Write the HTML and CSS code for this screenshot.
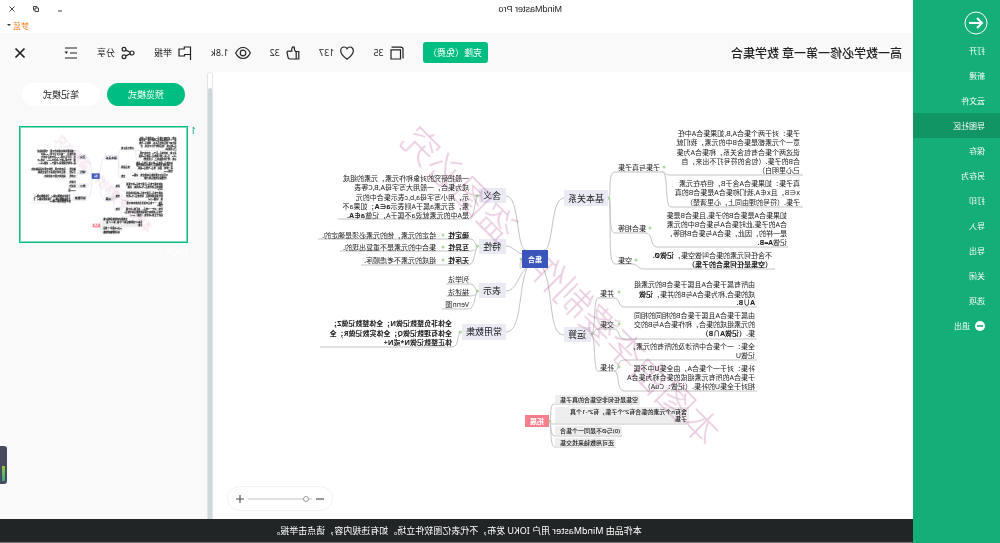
FILE: index.html
```html
<!DOCTYPE html>
<html lang="zh-CN">
<head>
<meta charset="utf-8">
<title>MindMaster Pro</title>
<link rel="stylesheet" href="styles.css">
</head>
<body>
<div class="window">
  <nav class="sidebar">
    <button class="back" aria-label="返回">
      <svg viewBox="0 0 24 24"><circle cx="12" cy="12" r="11"/><path d="M19 12H6M11 7l-5 5 5 5" stroke-width="2"/></svg>
    </button>
    <a class="item" href="#">打开</a>
    <a class="item" href="#">新建</a>
    <a class="item" href="#">云文件</a>
    <a class="item active" href="#">导图社区</a>
    <a class="item" href="#">保存</a>
    <a class="item" href="#">另存为</a>
    <a class="item" href="#">打印</a>
    <a class="item" href="#">导入</a>
    <a class="item" href="#">导出</a>
    <a class="item" href="#">关闭</a>
    <a class="item" href="#">选项</a>
    <a class="item" href="#"><svg class="exit" viewBox="0 0 10 10"><circle cx="5" cy="5" r="5" fill="#fff"/><path d="M2 5h6" stroke="#14ae78" stroke-width="1.6"/></svg>退出</a>
  </nav>
  <div class="main">
    <header class="titlebar">
      <div class="caption">
        <h1>MindMaster Pro</h1>
        <div class="controls">
          <button aria-label="最小化"><svg viewBox="0 0 8 8"><path d="M2 6h4"/></svg></button>
          <button aria-label="还原"><svg viewBox="0 0 8 8"><path d="M3 3V1.500h3.500V5H5M1.500 3H5v3.500H1.500z"/></svg></button>
          <button aria-label="关闭窗口"><svg viewBox="0 0 8 8"><path d="M1.500 1.500l5 5M6.500 1.500l-5 5"/></svg></button>
        </div>
      </div>
      <button class="user">梦蓝<span class="caret"></span></button>
    </header>
    <div class="toolbar">
      <h2>高一数学必修一第一章 数学集合</h2>
      <button class="clone">克隆（免费）</button>
      <button class="stat"><svg viewBox="0 0 14 14"><path d="M12.500 1.200H3a2 2 0 0 0-2 2V12.500M3.500 3.800H13V13H3.500z"/></svg>35</button>
      <button class="stat"><svg viewBox="0 0 14 14"><path d="M7 13.200C4.500 11.300.7 8.500.7 4.900.7 2.500 2.300 1 4.200 1 5.500 1 6.500 1.700 7 2.700 7.500 1.700 8.500 1 9.800 1c1.900 0 3.500 1.500 3.500 3.900 0 3.600-3.800 6.400-6.300 8.300z"/></svg>137</button>
      <button class="stat"><svg viewBox="0 0 14 14"><path d="M1.200 5.500h2.600V13H1.200zM3.800 6.200C5.500 5.200 5.800 3.700 5.900 1c1.900-.4 2.700 1 2.300 4.200h3.300c1.200 0 1.600.8 1.400 1.700l-1 4.800c-.2.900-.8 1.300-1.600 1.300H3.800"/></svg>32</button>
      <button class="stat"><svg class="wide" viewBox="0 0 16 14"><path d="M.7 7C2.500 3.300 5 1.500 8 1.500S13.500 3.300 15.300 7C13.500 10.700 11 12.500 8 12.500S2.500 10.700.7 7z"/><circle cx="8" cy="7" r="2.800"/></svg>1.8k</button>
      <button class="stat"><svg viewBox="0 0 14 14"><path d="M1.500 14V1h6.200v2H13v7H7.500V8.500h-6"/></svg>举报</button>
      <button class="stat"><svg viewBox="0 0 14 14"><circle cx="3" cy="7" r="2"/><circle cx="11" cy="3.300" r="1.900"/><circle cx="11" cy="10.700" r="1.900"/><path d="M4.800 6.200l4.400-2.100M4.800 7.800l4.400 2.100"/></svg>分享</button>
      <button class="plain" aria-label="大纲"><svg viewBox="0 0 14 14"><path d="M1 2h12M1 7h7M1 12h12"/><path d="M10 5.500h3.500L11.700 8z" class="solid"/></svg></button>
      <button class="plain close" aria-label="关闭"><svg viewBox="0 0 14 14"><path d="M2.500 2.500l9 9M11.500 2.500l-9 9" stroke-width="1.700"/></svg></button>
    </div>
    <div class="content">
      <section class="canvas">
        <svg class="map" viewBox="87 72 700 447">
          <g id="mindmap">
            <g class="links">
              <path d="M436 198C450 198 446 250 456 250M436 335C452 335 446 290 457 268"/>
              <path d="M494 196C480 196 484 250 474 250M494 246C488 246 484 252 478 254M494 291C484 291 482 276 474 268M494 332C478 332 482 290 473 268"/>
              <path d="M392 198C388 198 393 172 385 172H338C333 172 336 175 330 175H197M338 172C331 172 336 207 329 207H197"/>
              <path d="M391 198C388 198 393 233 385 233H354C347 233 350 247 343 247H212M391 198C388 220 393 264 385 264H368C362 264 362 269 357 269H225"/>
              <path d="M409 334C404 334 407 298 402 298H386C380 298 382 307 376 307H243M409 334C404 334 407 329 402 329H386C380 329 382 339 376 339H243"/>
              <path d="M409 334C404 334 407 371 402 371H386C380 371 384 360 376 360H243M386 371C380 371 384 391 376 391H243"/>
              <path d="M521 195C526 195 524 219 532 219H662M521 246C526 246 524 239 530 239H682M521 246C524 248 524 251 530 251H660M521 246C526 246 524 265 532 265H639"/>
              <path d="M521 291C526 291 524 284 530 284H554M521 291C524 293 524 296 530 296H554M521 291C526 291 524 309 532 309H558M538 332C544 332 540 347 548 347H680"/>
              <path d="M451 421C448 421 451 404 446 404H360M451 421C449 424 449 424 445 424H311M451 421C448 421 451 436 445 436H378M451 421C448 421 451 447 445 447H384"/>
            </g>
            <g class="dots">
              <circle cx="391" cy="198" r="1.500"/><circle cx="336" cy="167" r="1.500"/><circle cx="350" cy="228" r="1.500"/><circle cx="364" cy="260" r="1.500"/>
              <circle cx="408" cy="334" r="1.500"/><circle cx="381" cy="292" r="1.500"/><circle cx="381" cy="324" r="1.500"/><circle cx="381" cy="367" r="1.500"/>
              <circle cx="479" cy="259" r="1.500"/><circle cx="523" cy="196" r="1.500"/><circle cx="523" cy="246" r="1.500"/><circle cx="523" cy="291" r="1.500"/><circle cx="540" cy="332" r="1.500"/>
              <circle cx="557" cy="235" r="1.500"/><circle cx="557" cy="247" r="1.500"/><circle cx="557" cy="260" r="1.500"/><circle cx="450" cy="421" r="1.500"/>
            </g>
            <g class="main-topics">
              <rect x="392" y="190" width="44" height="16"/><text x="414" y="202">基本关系</text>
              <rect x="409" y="327" width="27" height="15"/><text x="423" y="338">运算</text>
              <rect x="494" y="188" width="27" height="15"/><text x="508" y="199">含义</text>
              <rect x="494" y="239" width="27" height="15"/><text x="508" y="250">特性</text>
              <rect x="494" y="283" width="27" height="15"/><text x="508" y="294">表示</text>
              <rect x="494" y="324" width="44" height="16"/><text x="516" y="335">常用数集</text>
            </g>
            <g class="notes">
              <rect x="360" y="395" width="85" height="9"/><rect x="311" y="407" width="134" height="16"/><rect x="378" y="426" width="67" height="9"/><rect x="384" y="438" width="61" height="9"/>
              <text x="362" y="402">空集是任何非空集合的真子集</text>
              <text><tspan x="313" y="414">含有n个元素的集合有2ⁿ个子集，有2ⁿ-1个真</tspan><tspan x="313" y="421">子集</tspan></text>
              <text x="380" y="433">(0)与Ø不是同一个集合</text>
              <text x="386" y="445">还可用数轴来找交集</text>
            </g>
            <g class="topics">
              <text x="340" y="170">子集与真子集</text><text x="354" y="231">集合相等</text><text x="368" y="263">空集</text>
              <text x="386" y="296">并集</text><text x="386" y="327">交集</text><text x="386" y="370">补集</text>
              <text><tspan x="200" y="136">子集：对于两个集合A,B,如果集合A中任</tspan><tspan x="200" y="145">意一个元素都是集合B中的元素，我们就</tspan><tspan x="200" y="155">说这两个集合有包含关系，称集合A为集</tspan><tspan x="200" y="164">合B的子集.（包含的符号打不出来，自</tspan><tspan x="200" y="173">己心里明白）</tspan></text>
              <text><tspan x="200" y="186">真子集：如果集合A含于B，但存在元素</tspan><tspan x="200" y="195">x∈B，且x∉A,我们称集合A是集合B的真</tspan><tspan x="200" y="205">子集.（符号的理由同上，心里清楚）</tspan></text>
              <text><tspan x="213" y="218">如果集合A是集合B的子集,且集合B是集</tspan><tspan x="213" y="227">合A的子集,此时集合A与集合B中的元素</tspan><tspan x="213" y="236">是一样的，因此，集合A与集合B相等，</tspan><tspan x="213" y="245">记做<tspan class="b">A=B.</tspan></tspan></text>
              <text><tspan x="228" y="258">不含任何元素的集合叫做空集，<tspan class="b">记做Ø.</tspan></tspan><tspan x="228" y="267" class="b">（空集是任何集合的子集）</tspan></text>
              <text><tspan x="245" y="287">由所有属于集合A且属于集合B的元素组</tspan><tspan x="245" y="297">成的集合,称为集合A与B的并集，<tspan class="b">记做</tspan></tspan><tspan x="245" y="305" class="b">A∪B.</tspan></text>
              <text><tspan x="245" y="318">由属于集合A且属于集合B的相同的相同</tspan><tspan x="245" y="327">的元素组成的集合，称作集合A与B的交</tspan><tspan x="245" y="336">集.<tspan class="b">（记做A∩B）</tspan></tspan></text>
              <text><tspan x="245" y="349">全集：一个集合中所涉及的所有的元素，</tspan><tspan x="245" y="358">记做U</tspan></text>
              <text><tspan x="245" y="371">补集：对于一个集合A，由全集U中不属</tspan><tspan x="245" y="380">于集合A的所有元素组成的集合称为集合A</tspan><tspan x="245" y="389">相对于全集U的补集.（记做：CuA）</tspan></text>
              <text><tspan x="531" y="181">一般把研究的对象称作元素，元素的组成</tspan><tspan x="531" y="190">成为集合，一般用大写字母A,B,C等表</tspan><tspan x="531" y="200">示，用小写字母a,b,c表示集合中的元</tspan><tspan x="531" y="209">素，若元素a属于A则表示<tspan class="b">a∈A</tspan>；如果a不</tspan><tspan x="531" y="218">是A中的元素就说a不属于A，记做<tspan class="b">a∉A.</tspan></tspan></text>
              <text class="b" x="531" y="238">确定性</text><text x="564" y="238">给定的元素，他的元素必须是确定的.</text>
              <text class="b" x="531" y="250">互异性</text><text x="564" y="250">集合中的元素是不重复出现的.</text>
              <text class="b" x="531" y="263">无序性</text><text x="564" y="263">组成的元素不考虑顺序.</text>
              <text x="531" y="282">列举法</text><text x="531" y="295">描述法</text><text x="531" y="307">Venn图</text>
              <text class="b"><tspan x="548" y="326">全体非负整数记做N；全体整数记做Z；</tspan><tspan x="548" y="336">全体有理数记做Q；全体实数记做R；全</tspan><tspan x="548" y="345">体正整数记做N*或N+</tspan></text>
            </g>
            <text class="watermark" transform="rotate(-45 440 287)" x="440" y="299">本图由李婆制作，盗图必究</text>
            <rect class="root" x="452" y="250" width="26" height="18"/><text class="root-label" x="465" y="262">集合</text>
            <rect class="extra" x="451" y="415" width="24" height="12"/><text class="root-label" x="463" y="424">拓展</text>
          </g>
        </svg>
        <div class="zoom">
          <button aria-label="缩小"><svg viewBox="0 0 8 8"><path d="M0 4h8"/></svg></button>
          <input type="range" min="0" max="100" value="6" aria-label="缩放">
          <button aria-label="放大"><svg viewBox="0 0 8 8"><path d="M0 4h8M4 0v8"/></svg></button>
        </div>
      </section>
      <div class="scrollbar"><div class="thumb"></div></div>
      <aside class="panel">
        <div class="modes">
          <button class="mode on">预览模式</button>
          <button class="mode">笔记模式</button>
        </div>
        <div class="page">
          <span class="number">1</span>
          <figure>
            <svg viewBox="167 98 545 377"><use href="#mindmap"/></svg>
            <figcaption>Page-1</figcaption>
          </figure>
        </div>
        <div class="meter"><i></i></div>
      </aside>
    </div>
    <footer>本作品由 MindMaster 用户 IOKU 发布，不代表亿图软件立场。如有违规内容，请点击举报。</footer>
  </div>
</div>
</body>
</html>
```
FILE: styles.css
```css
* { box-sizing: border-box; }
body {
  margin: 0;
  font-family: "Noto Sans", "Noto Sans CJK SC", sans-serif;
  font-size: 9px;
  color: #222;
  background: #fff;
}
button {
  display: flex;
  align-items: center;
  justify-content: center;
  padding: 0;
  border: 0;
  background: none;
  font: inherit;
  color: inherit;
  white-space: nowrap;
}
h1, h2, figure { margin: 0; }
svg { display: block; fill: none; }

/* the whole window is shown mirrored */
.window {
  display: flex;
  height: 100vh;
  overflow: hidden;
  transform: scaleX(-1);
}

.sidebar {
  width: 87px;
  flex: none;
  background: #14ae78;
  color: #fff;
  font-size: 8px;
}
.back { height: 38px; padding: 8px 0 0 12px; }
.back svg { width: 24px; height: 24px; stroke: #fff; }
.item {
  display: flex;
  align-items: center;
  gap: 5px;
  height: 25px;
  padding-left: 15px;
  color: #fff;
  text-decoration: none;
}
.item.active { background: #119565; }
.exit { width: 10px; height: 10px; }

.main { flex: 1; min-width: 0; display: flex; flex-direction: column; }
.titlebar { height: 33px; flex: none; }
.caption {
  display: flex;
  align-items: center;
  justify-content: space-between;
  height: 17px;
  padding: 0 8px 0 351px;
}
.caption h1 { font-family: "Liberation Sans", sans-serif; font-size: 9px; font-weight: 400; }
.controls { display: flex; gap: 16px; }
.controls svg { width: 8px; height: 8px; stroke: #444; }
.user { height: 16px; margin-left: auto; padding-right: 7px; gap: 2px; font-size: 8px; color: #f7862b; }
.caret { border: 2px solid transparent; border-top-color: #333; border-bottom: 0; }

.toolbar {
  display: flex;
  align-items: center;
  gap: 19px;
  flex: none;
  height: 39px;
  padding: 0 13px 0 11px;
  background: #f9f9f9;
}
.toolbar h2 { flex: 1; font-size: 12px; font-weight: 500; white-space: nowrap; }
.clone { width: 65px; height: 21px; border-radius: 3px; background: #00bd82; color: #fff; }
.stat { gap: 6px; }
.toolbar svg { width: 14px; height: 14px; stroke: #222; stroke-width: 1.2; }
.toolbar svg.wide { width: 16px; }
.toolbar .solid { fill: #222; stroke: none; }
.close { margin-left: 18px; }

.content { display: flex; flex: 1; min-height: 0; }
.canvas { position: relative; flex: 1; min-width: 0; background: #fff; }
.map { width: 100%; height: 100%; }
.links { stroke: #c4c4c4; stroke-width: 1; }
.dots { fill: #a9dc9c; stroke: none; }
.main-topics rect { fill: #e9eaf4; stroke: none; }
.main-topics text { font-size: 9px; text-anchor: middle; fill: #222; }
.root { fill: #3b56bb; stroke: none; }
.extra { fill: #f77e8c; stroke: none; }
.root-label { font-size: 7px; font-weight: 700; text-anchor: middle; fill: #fff; stroke: none; }
.notes rect { fill: #eee; stroke: none; }
.notes text { font-size: 6px; font-weight: 500; fill: #111; }
.topics { font-size: 7px; fill: #222; }
.b { font-weight: 700; }
.watermark {
  font-family: "Liberation Serif", "Noto Sans CJK SC", serif;
  font-size: 36px;
  font-weight: 300;
  text-anchor: middle;
  fill: #ebcbe1;
  stroke: none;
  mix-blend-mode: multiply;
}

.zoom {
  position: absolute;
  right: 14px;
  bottom: 8px;
  display: flex;
  align-items: center;
  justify-content: center;
  gap: 4px;
  width: 106px;
  height: 25px;
  border: 1px solid #f1f1f1;
  border-radius: 13px;
  background: #fff;
}
.zoom svg { width: 8px; height: 8px; stroke: #555; stroke-width: 1.2; }
.zoom input { -webkit-appearance: none; appearance: none; width: 64px; height: 8px; margin: 0; background: none; }
.zoom input::-webkit-slider-runnable-track { height: 2px; background: #e0e0e0; }
.zoom input::-webkit-slider-thumb {
  -webkit-appearance: none;
  width: 6px;
  height: 6px;
  margin-top: -2px;
  border: 1px solid #999;
  border-radius: 50%;
  background: #fff;
}

.scrollbar { width: 6px; flex: none; padding-top: 15px; border: 1px solid #e4e6e6; border-bottom: 0; border-radius: 3px 3px 0 0; background: #fff; }
.thumb { height: 100%; border-radius: 3px 3px 0 0; background: #cdd8d9; }

.panel { position: relative; width: 207px; flex: none; background: #f9f9f9; }
.modes { display: flex; gap: 7px; padding: 11px 22px 0; }
.mode { width: 78px; height: 23px; border-radius: 12px; background: #fff; }
.mode.on { background: #00bd82; color: #fff; }
.page { display: flex; padding: 20px 0 0 11px; gap: 3px; }
.number { width: 5px; line-height: 10px; color: #00a870; }
.page figure > svg {
  width: 169px;
  height: 117px;
  border: 1px solid #00bd82;
  outline: 1px solid #7fdcbc;
  outline-offset: -2px;
  background: #fff;
  stroke: #222;
  stroke-width: 0.4;
}
.page figcaption { line-height: 16px; color: #fff; }
.meter {
  position: absolute;
  right: 0;
  bottom: 35px;
  width: 7px;
  height: 38px;
  padding: 20px 2px 3px;
  border-radius: 3px 0 0 3px;
  background: #474a5c;
}
.meter i { display: block; height: 100%; background: linear-gradient(#9bc53d, #2cae84); }

footer {
  display: flex;
  align-items: center;
  justify-content: center;
  flex: none;
  height: 24px;
  border-bottom: 1px solid #777;
  background: #212526;
  color: #fff;
  white-space: nowrap;
}
```
